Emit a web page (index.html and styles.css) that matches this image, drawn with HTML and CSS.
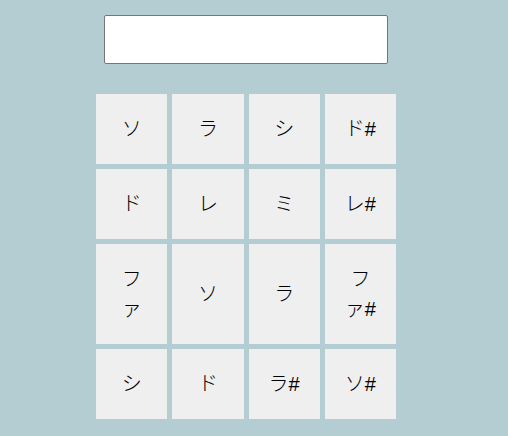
FILE: index.html
```html
<!DOCTYPE html>
<html lang="ja">
<head>
<meta charset="utf-8">
<title>Keys</title>
<link rel="stylesheet" href="styles.css">
</head>
<body>
<div class="app">
  <input class="display" type="text">
  <div class="keys">
    <button class="key">ソ</button>
    <button class="key">ラ</button>
    <button class="key">シ</button>
    <button class="key">ド#</button>
    <button class="key">ド</button>
    <button class="key">レ</button>
    <button class="key">ミ</button>
    <button class="key">レ#</button>
    <button class="key">ファ</button>
    <button class="key">ソ</button>
    <button class="key">ラ</button>
    <button class="key">ファ#</button>
    <button class="key">シ</button>
    <button class="key">ド</button>
    <button class="key">ラ#</button>
    <button class="key">ソ#</button>
  </div>
</div>
</body>
</html>
```
FILE: styles.css
```css
html, body {
  margin: 0;
  background: #b3cdd3;
}
.app {
  width: 300px;
  margin-left: 96px;
  padding-top: 15px;
}
.display {
  display: block;
  box-sizing: border-box;
  width: 284px;
  height: 49px;
  margin: 0 auto 30px;
  border: 1px solid #767676;
  border-radius: 2px;
  background: #fff;
}
.keys {
  display: grid;
  grid-template-columns: repeat(4, 1fr);
  gap: 5px;
}
.key {
  border: none;
  border-radius: 0;
  background: #efefef;
  color: #000;
  font-family: "Liberation Sans", "Noto Sans CJK JP", sans-serif;
  font-weight: 300;
  font-size: 20px;
  line-height: 30px;
  padding: 20px 18px;
  margin: 0;
}
```
